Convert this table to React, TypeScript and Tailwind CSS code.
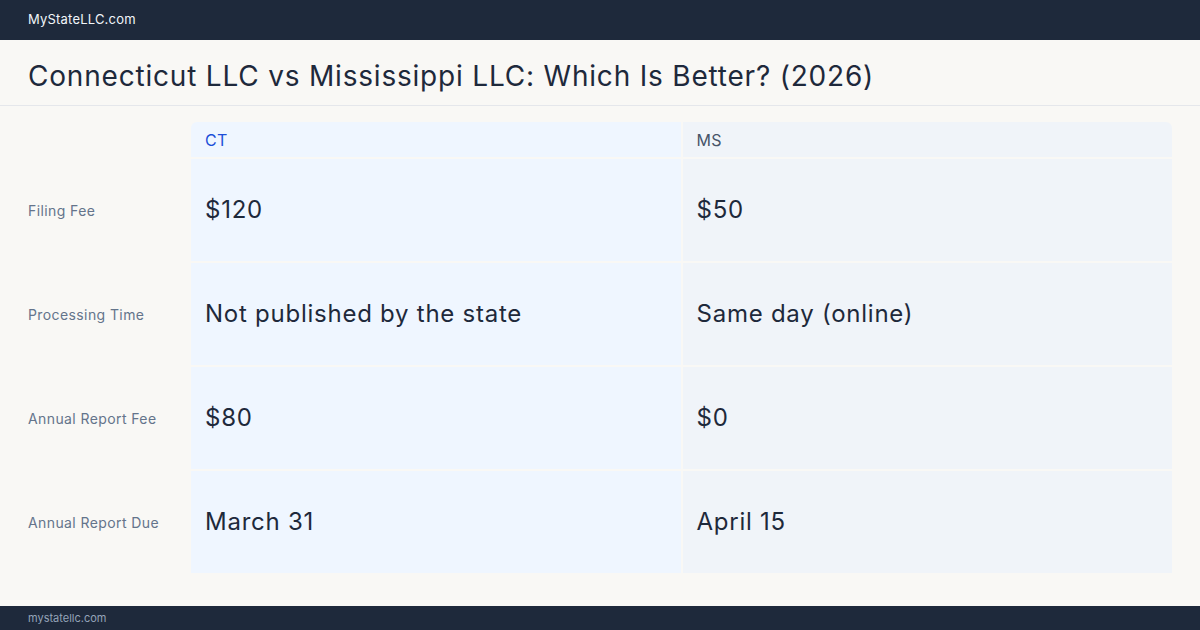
import React from "react";

const rows = [
  { label: "Filing Fee", ct: "$120", ms: "$50" },
  { label: "Processing Time", ct: "Not published by the state", ms: "Same day (online)" },
  { label: "Annual Report Fee", ct: "$80", ms: "$0" },
  { label: "Annual Report Due", ct: "March 31", ms: "April 15" },
];

export default function App() {
  return (
    <div
      className="w-[1200px] h-[630px] flex flex-col bg-[#f9f8f5] overflow-hidden"
      style={{ fontFamily: "Inter, 'Noto Sans', sans-serif" }}
    >
      <div className="h-[40px] shrink-0 bg-[#1e293b] flex items-center px-[28px]">
        <span className="text-[13px] text-[#f1f5f9] tracking-[0.2px]">MyStateLLC.com</span>
      </div>
      <div className="h-[66px] shrink-0 flex items-center px-[28px] border-b border-[#e5e7eb]">
        <h1 className="text-[28px] text-[#1e293b] leading-none tracking-[0.8px] pt-[6px]">
          Connecticut LLC vs Mississippi LLC: Which Is Better? (2026)
        </h1>
      </div>
      <div className="flex-1 px-[28px] pt-[16px]">
        <div className="grid grid-cols-[161px_1fr_1fr] grid-rows-[35px_102px_102px_102px_102px] gap-[2px]">
          <div />
          <div className="bg-[#eff6ff] rounded-tl-[6px] flex items-center px-[14px] text-[16px] tracking-[0.3px] text-[#1d4ed8]">CT</div>
          <div className="bg-[#f0f4f9] rounded-tr-[6px] flex items-center px-[14px] text-[16px] tracking-[0.3px] text-[#475569]">MS</div>
          {rows.map((r) => (
            <React.Fragment key={r.label}>
              <div className="flex items-center text-[14px] tracking-[0.4px] text-[#64748b]">{r.label}</div>
              <div className="bg-[#eff6ff] flex items-center px-[14px] text-[24px] tracking-[0.75px] text-[#1e293b]">{r.ct}</div>
              <div className="bg-[#f0f4f9] flex items-center px-[14px] text-[24px] tracking-[0.75px] text-[#1e293b]">{r.ms}</div>
            </React.Fragment>
          ))}
        </div>
      </div>
      <div className="h-[24px] shrink-0 bg-[#1e293b] flex items-center px-[28px]">
        <span className="text-[11px] text-[#94a3b8]">mystatellc.com</span>
      </div>
    </div>
  );
}
